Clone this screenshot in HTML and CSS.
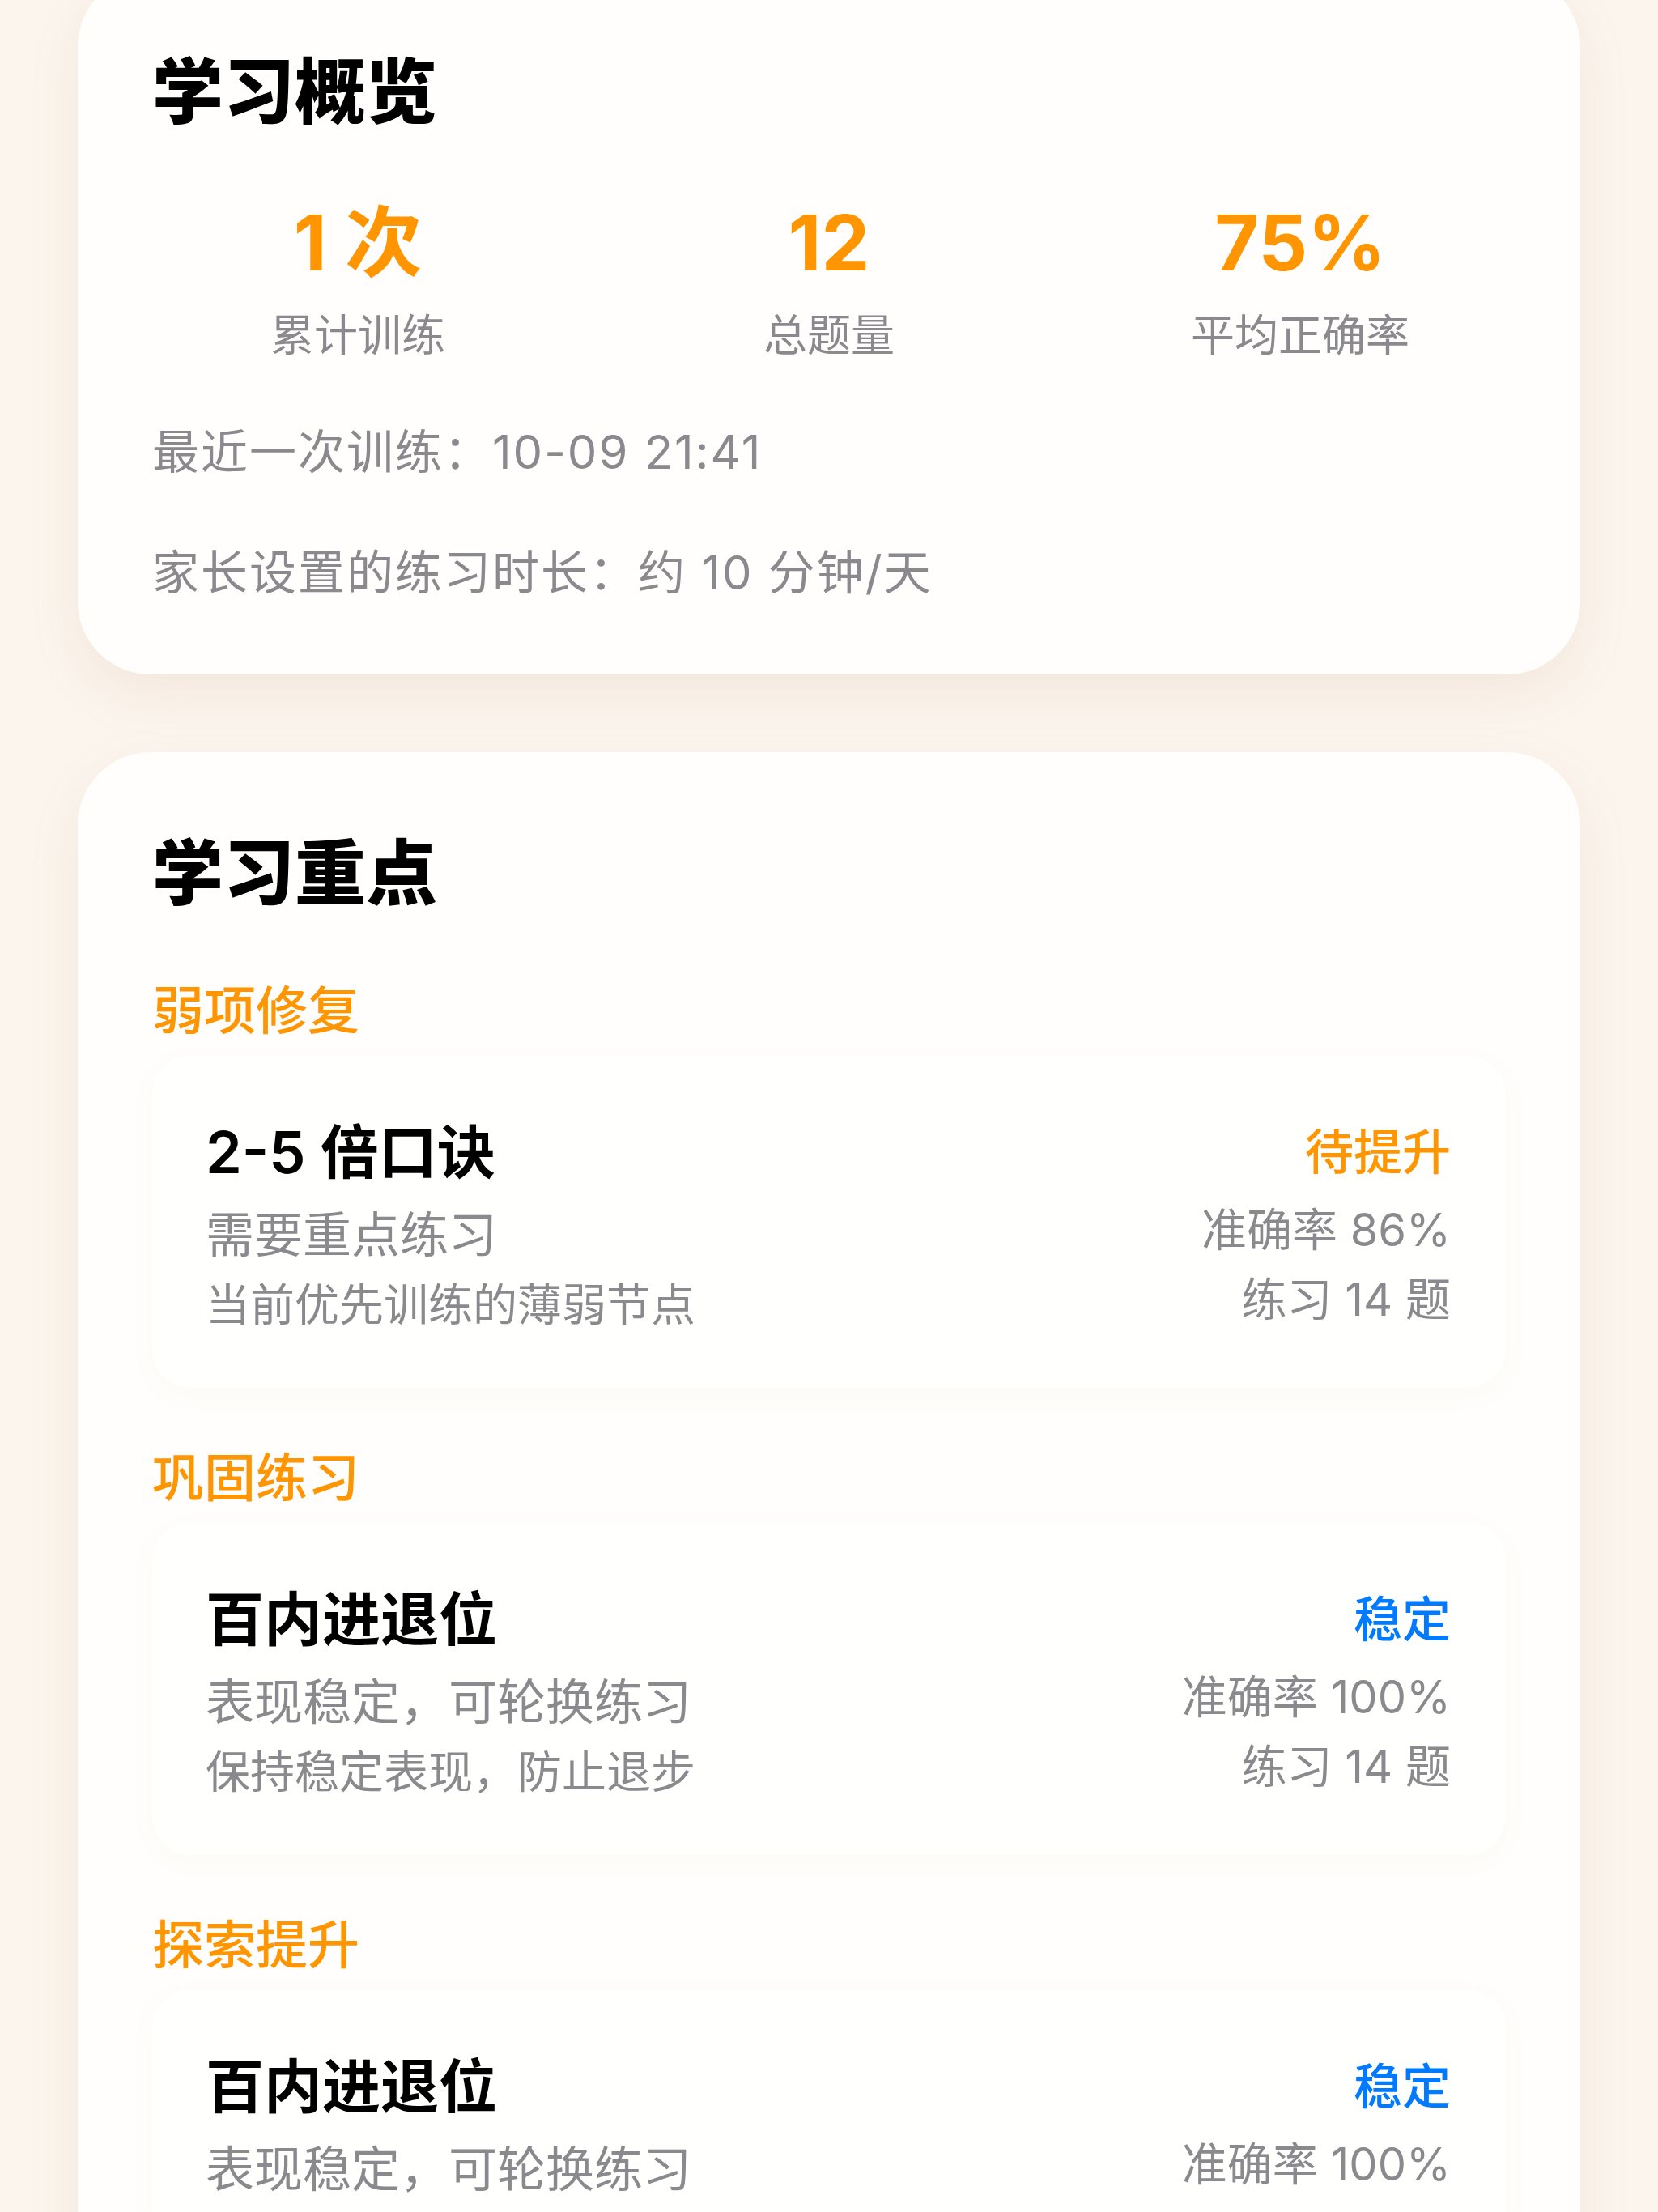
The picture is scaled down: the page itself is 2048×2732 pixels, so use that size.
FILE: index.html
```html
<!DOCTYPE html>
<html lang="zh-CN">
<head>
    <meta charset="UTF-8">
    <meta name="viewport" content="width=device-width, initial-scale=1.0">
    <title>学习报告</title>
    <link rel="stylesheet" href="styles.css">
</head>
<body>
    <div class="page">
        <section class="card overview">
            <h2 class="card-title">学习概览</h2>
            <div class="stats">
                <div class="stat">
                    <div class="stat-value">1 次</div>
                    <div class="stat-label">累计训练</div>
                </div>
                <div class="stat">
                    <div class="stat-value">12</div>
                    <div class="stat-label">总题量</div>
                </div>
                <div class="stat">
                    <div class="stat-value">75%</div>
                    <div class="stat-label">平均正确率</div>
                </div>
            </div>
            <p class="info">最近一次训练：10-09 21:41</p>
            <p class="info">家长设置的练习时长：约 10 分钟/天</p>
        </section>

        <section class="card focus">
            <h2 class="card-title">学习重点</h2>

            <div class="group">
                <h3 class="group-title">弱项修复</h3>
                <div class="item">
                    <div class="item-main">
                        <div class="item-name">2-5 倍口诀</div>
                        <div class="item-sub">需要重点练习</div>
                        <div class="item-desc">当前优先训练的薄弱节点</div>
                    </div>
                    <div class="item-side">
                        <div class="item-status warn">待提升</div>
                        <div class="item-meta">准确率 86%</div>
                        <div class="item-meta">练习 14 题</div>
                    </div>
                </div>
            </div>

            <div class="group">
                <h3 class="group-title">巩固练习</h3>
                <div class="item">
                    <div class="item-main">
                        <div class="item-name">百内进退位</div>
                        <div class="item-sub">表现稳定，可轮换练习</div>
                        <div class="item-desc">保持稳定表现，防止退步</div>
                    </div>
                    <div class="item-side">
                        <div class="item-status ok">稳定</div>
                        <div class="item-meta">准确率 100%</div>
                        <div class="item-meta">练习 14 题</div>
                    </div>
                </div>
            </div>

            <div class="group">
                <h3 class="group-title">探索提升</h3>
                <div class="item">
                    <div class="item-main">
                        <div class="item-name">百内进退位</div>
                        <div class="item-sub">表现稳定，可轮换练习</div>
                    </div>
                    <div class="item-side">
                        <div class="item-status ok">稳定</div>
                        <div class="item-meta">准确率 100%</div>
                    </div>
                </div>
            </div>
        </section>
    </div>
</body>
</html>
```

FILE: styles.css
```css
body {
    margin: 0;
    background: #fcf5ee;
    font-family: "Inter", "Noto Sans CJK SC", sans-serif;
    color: #000;
    overflow: hidden;
}
.page {
    padding: 0 96px;
}
.card {
    background: #fffefc;
    border-radius: 90px;
    padding: 92px 92px 86px;
    box-shadow: 0 24px 64px rgba(170, 120, 70, 0.10);
}
.overview {
    margin-top: -32px;
}
.focus {
    margin-top: 96px;
    padding-top: 96px;
}
.card-title {
    margin: 0;
    font-size: 88px;
    line-height: 106px;
    font-weight: 800;
}

.stats {
    display: grid;
    grid-template-columns: repeat(3, 1fr);
    margin: 74px -37px 0;
    text-align: center;
}
.stat-value {
    font-size: 95px;
    line-height: 120px;
    font-weight: 700;
    color: #ff9500;
}
.stat-label {
    margin-top: 20px;
    font-size: 54px;
    line-height: 70px;
    color: #8a8a8e;
}
.info {
    margin: 68px 0 0;
    font-size: 58px;
    line-height: 80px;
    letter-spacing: 2px;
    color: #8a8a8e;
}
.info + .info { margin-top: 69px; }

.group { margin-top: 70px; }
.card-title + .group { margin-top: 76px; }
.group-title {
    margin: 0;
    font-size: 64px;
    line-height: 81px;
    font-weight: 500;
    color: #ff9500;
}
.item {
    display: flex;
    justify-content: space-between;
    margin-top: 16px;
    padding: 72px 68px 60px 66px;
    border-radius: 48px;
    background: #fffffe;
    box-shadow: 0 8px 36px rgba(160, 120, 70, 0.03);
}
.item-name {
    font-size: 72px;
    line-height: 94px;
    font-weight: 600;
}
.item-sub {
    margin-top: 12px;
    font-size: 60px;
    line-height: 86px;
    color: #8a8a8e;
}
.item-desc {
    font-size: 55px;
    line-height: 86px;
    color: #8a8a8e;
}
.item-side { text-align: right; }
.item-status {
    font-size: 60px;
    line-height: 94px;
    font-weight: 500;
}
.item-status.warn { color: #ff9500; }
.item-status.ok { color: #007aff; }
.item-meta {
    font-size: 56px;
    line-height: 86px;
    color: #8a8a8e;
}
.item-status + .item-meta { margin-top: 6px; }
```
